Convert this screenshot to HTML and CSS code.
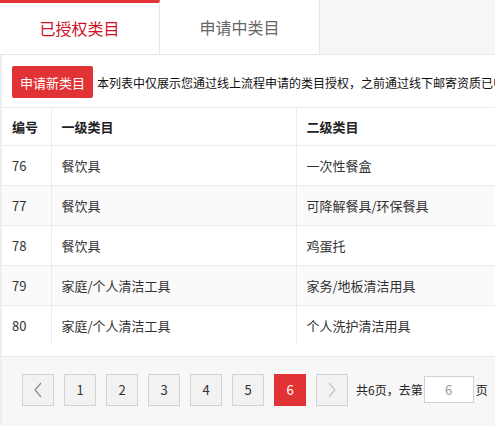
FILE: index.html
```html
<!DOCTYPE html>
<html lang="zh">
<head>
<meta charset="utf-8">
<title>类目管理</title>
<link rel="stylesheet" href="styles.css">
</head>
<body>
<div class="page">
  <div class="tabs">
    <div class="tab active">已授权类目</div>
    <div class="tab">申请中类目</div>
  </div>
  <div class="panel">
    <div class="toolbar">
      <button class="btn-apply">申请新类目</button>
      <span class="notice">本列表中仅展示您通过线上流程申请的类目授权，之前通过线下邮寄资质已申请的类目请联系客服查询</span>
    </div>
    <table class="grid">
      <colgroup>
        <col class="c-id">
        <col class="c-first">
        <col class="c-second">
      </colgroup>
      <thead>
        <tr><th>编号</th><th>一级类目</th><th>二级类目</th></tr>
      </thead>
      <tbody>
        <tr><td>76</td><td>餐饮具</td><td>一次性餐盒</td></tr>
        <tr><td>77</td><td>餐饮具</td><td>可降解餐具/环保餐具</td></tr>
        <tr><td>78</td><td>餐饮具</td><td>鸡蛋托</td></tr>
        <tr><td>79</td><td>家庭/个人清洁工具</td><td>家务/地板清洁用具</td></tr>
        <tr><td>80</td><td>家庭/个人清洁工具</td><td>个人洗护清洁用具</td></tr>
      </tbody>
    </table>
    <div class="pager">
      <span class="pg pg-arrow">
        <svg width="10" height="16" viewBox="0 0 10 16"><path d="M8 1 L2 8 L8 15" fill="none" stroke="#8a8a8a" stroke-width="1.2"/></svg>
      </span>
      <span class="pg">1</span>
      <span class="pg">2</span>
      <span class="pg">3</span>
      <span class="pg">4</span>
      <span class="pg">5</span>
      <span class="pg current">6</span>
      <span class="pg pg-arrow">
        <svg width="10" height="16" viewBox="0 0 10 16"><path d="M2 1 L8 8 L2 15" fill="none" stroke="#c4c4c4" stroke-width="1.2"/></svg>
      </span>
      <span class="jump">共6页，去第</span>
      <input class="jump-input" type="text" value="6">
      <span class="jump-end">页</span>
    </div>
  </div>
</div>
</body>
</html>
```
FILE: styles.css
```css
html, body {
  margin: 0;
  padding: 0;
  overflow: hidden;
}
body {
  font-family: "Noto Sans CJK SC", "Noto Sans", "Liberation Sans", sans-serif;
  background: #f6f6f6;
  color: #333;
}
.page {
  width: 495px;
  height: 426px;
  overflow: hidden;
}
.tabs {
  display: flex;
  height: 54px;
  background: #f6f6f6;
  border-bottom: 1px solid #e6e6e6;
}
.tab {
  width: 160px;
  box-sizing: border-box;
  background: #fff;
  border-right: 1px solid #e8e8e8;
  font-size: 16px;
  color: #666;
  text-align: center;
  line-height: 54px;
}
.tab.active {
  color: #d01027;
  border-top: 3px solid #e23438;
  line-height: 51px;
}
.panel {
  width: 700px;
  background: #fff;
  border-left: 2px solid #eeeeee;
}
.toolbar {
  display: flex;
  align-items: center;
  padding: 11px 10px 9px 10px;
  white-space: nowrap;
}
.btn-apply {
  height: 32px;
  width: 81px;
  padding: 0;
  border: none;
  border-radius: 2px;
  background: #e13335;
  color: #fff;
  font-family: inherit;
  font-size: 13px;
  flex-shrink: 0;
}
.notice {
  margin-left: 4px;
  font-size: 12px;
  color: #111;
}
.grid {
  width: 700px;
  border-collapse: collapse;
  table-layout: fixed;
  font-size: 13px;
  color: #333;
}
.c-id { width: 49px; }
.c-first { width: 245px; }
.grid th, .grid td {
  border: 1px solid #ececec;
  border-left: none;
  text-align: left;
  padding: 0 0 0 10px;
  white-space: nowrap;
}
.grid th + th, .grid td + td {
  border-left: 1px solid #ececec;
}
.grid th {
  height: 37px;
  font-weight: bold;
  color: #222;
}
.grid td {
  height: 39px;
}
.grid tbody tr:last-child td {
  border-bottom: none;
}
.grid tbody tr:nth-child(even) td {
  background: #fafafa;
}
.pager {
  margin-top: 11px;
  border-top: 1px solid #e8e8e8;
  background: #f7f7f7;
  height: 68px;
  display: flex;
  align-items: center;
  padding-left: 20px;
  padding-bottom: 2px;
  box-sizing: border-box;
  font-size: 13px;
}
.pg {
  width: 32px;
  height: 32px;
  box-sizing: border-box;
  border: 1px solid #d2d2d2;
  background: #f2f2f2;
  margin-right: 10px;
  display: flex;
  align-items: center;
  justify-content: center;
  color: #333;
  font-size: 13px;
}
.pg.current {
  background: #e13335;
  border-color: #e13335;
  color: #fff;
}
.jump {
  margin-left: -2px;
  color: #222;
  font-size: 12px;
}
.jump-input {
  width: 50px;
  height: 27px;
  box-sizing: border-box;
  margin: 0 2px 0 1px;
  border: 1px solid #d2d2d2;
  background: #fff;
  text-align: center;
  color: #999;
  font-family: inherit;
  font-size: 13px;
  padding: 0;
}
.jump-end {
  color: #222;
  font-size: 12px;
}
```
